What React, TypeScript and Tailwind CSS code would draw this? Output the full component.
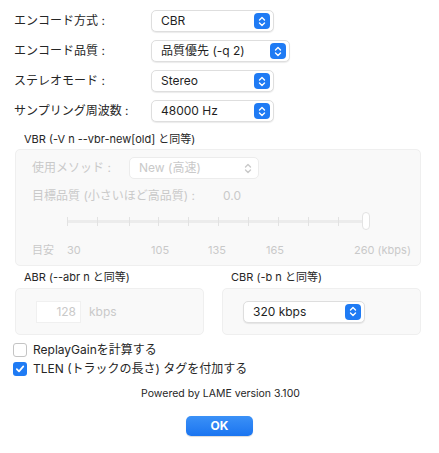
import React from "react";

const FONT = { fontFamily: 'Inter, "Noto Sans CJK JP", sans-serif' };

function Chevrons({ color }: { color: string }) {
  return (
    <svg width="8" height="11" viewBox="0 0 8 11" fill="none">
      <path d="M1.5 4 L4 1.5 L6.5 4" stroke={color} strokeWidth="1.4" strokeLinecap="round" strokeLinejoin="round" />
      <path d="M1.5 7 L4 9.5 L6.5 7" stroke={color} strokeWidth="1.4" strokeLinecap="round" strokeLinejoin="round" />
    </svg>
  );
}

function Select({ text, width, disabled }: { text: string; width: string; disabled?: boolean }) {
  if (disabled) {
    return (
      <div className={`${width} h-[22px] rounded-[5px] bg-white border border-[#ececec] flex items-center justify-between pl-[9px] pr-[6px] text-[12px] text-[#c9c9c9]`}>
        <span>{text}</span>
        <Chevrons color="#c9c9c9" />
      </div>
    );
  }
  return (
    <div className={`${width} h-[22px] rounded-[5px] bg-white border border-[#dedede] shadow-[0_1px_1px_rgba(0,0,0,0.08)] flex items-center justify-between pl-[9px] pr-[3px] text-[12px] text-[#1f1f1f]`}>
      <span>{text}</span>
      <div className="w-[16px] h-[16px] rounded-[4px] bg-[#1f7bf4] flex items-center justify-center">
        <Chevrons color="#ffffff" />
      </div>
    </div>
  );
}

function Row({ label, children }: { label: string; children: React.ReactNode }) {
  return (
    <div className="flex items-center h-[22px]">
      <div className="w-[137px] text-[12px] text-[#262626]">{label}</div>
      {children}
    </div>
  );
}

function Checkbox({ checked }: { checked?: boolean }) {
  if (checked) {
    return (
      <div className="w-[14px] h-[14px] rounded-[3px] bg-[#1f7bf4] flex items-center justify-center">
        <svg width="10" height="10" viewBox="0 0 10 10" fill="none">
          <path d="M1.8 5.2 L4 7.4 L8.3 2.4" stroke="#fff" strokeWidth="1.7" strokeLinecap="round" strokeLinejoin="round" />
        </svg>
      </div>
    );
  }
  return <div className="w-[14px] h-[14px] rounded-[3px] bg-white border border-[#c4c4c4]" />;
}

const TICKS = [0, 30, 62, 91, 121, 151, 181, 211, 241, 271];

export default function App() {
  return (
    <div style={FONT} className="w-[439px] h-[453px] bg-white pt-[10px] flex flex-col">
      <div className="pl-[14px] flex flex-col gap-[8px]">
        <Row label="エンコード方式 :">
          <Select text="CBR" width="w-[123px]" />
        </Row>
        <Row label="エンコード品質 :">
          <Select text="品質優先 (-q 2)" width="w-[139px]" />
        </Row>
        <Row label="ステレオモード :">
          <Select text="Stereo" width="w-[123px]" />
        </Row>
        <Row label="サンプリング周波数 :">
          <Select text="48000 Hz" width="w-[123px]" />
        </Row>
      </div>

      <div className="pl-[24px] mt-[9px] text-[11px] text-[#262626] leading-[16px]">VBR (-V n --vbr-new[old] と同等)</div>
      <div className="ml-[15px] mt-[2px] w-[406px] h-[117px] rounded-[5px] bg-[#f9f9f9] border border-[#efefef] pl-[16px] pt-[7px] flex flex-col">
        <div className="flex items-center h-[22px]">
          <div className="w-[97px] text-[12px] text-[#c9c9c9]">使用メソッド :</div>
          <Select text="New (高速)" width="w-[130px]" disabled />
        </div>
        <div className="flex items-center h-[18px] mt-[8px] text-[12px] text-[#c9c9c9]">
          <span className="w-[191px]">目標品質 (小さいほど高品質) :</span>
          <span>0.0</span>
        </div>
        <div className="relative ml-[35px] mt-[6px] w-[305px] h-[20px]">
          <div className="absolute left-0 top-[9px] w-[300px] h-[3px] rounded-full bg-[#ececec]" />
          {TICKS.map((t) => (
            <div key={t} className="absolute top-[6px] w-[1px] h-[9px] bg-[#e2e2e2]" style={{ left: t }} />
          ))}
          <div className="absolute left-[295px] top-[1px] w-[8px] h-[18px] rounded-full bg-white border border-[#e3e3e3]" />
        </div>
        <div className="relative h-[16px] mt-[11px] text-[11px] text-[#c9c9c9]">
          <span className="absolute left-0">目安</span>
          <span className="absolute left-[35px]">30</span>
          <span className="absolute left-[119px]">105</span>
          <span className="absolute left-[176px]">135</span>
          <span className="absolute left-[234px]">165</span>
          <span className="absolute left-[322px]">260 (kbps)</span>
        </div>
      </div>

      <div className="flex mt-[3px] ml-[15px] gap-[18px]">
        <div className="flex flex-col w-[189px]">
          <div className="pl-[9px] text-[11px] text-[#262626] leading-[16px]">ABR (--abr n と同等)</div>
          <div className="mt-[3px] h-[47px] rounded-[5px] bg-[#f9f9f9] border border-[#efefef] flex items-center pl-[20px]">
            <div className="w-[45px] h-[22px] bg-white border border-[#f0f0f0] flex items-center justify-end pr-[4px] text-[12px] text-[#c9c9c9]">128</div>
            <span className="ml-[8px] text-[12px] text-[#c9c9c9]">kbps</span>
          </div>
        </div>
        <div className="flex flex-col w-[199px]">
          <div className="pl-[9px] text-[11px] text-[#262626] leading-[16px]">CBR (-b n と同等)</div>
          <div className="mt-[3px] h-[47px] rounded-[5px] bg-[#f9f9f9] border border-[#efefef] flex items-center pl-[20px]">
            <Select text="320 kbps" width="w-[122px]" />
          </div>
        </div>
      </div>

      <div className="pl-[13px] mt-[8px] flex flex-col gap-[5px] text-[12px] text-[#262626]">
        <div className="flex items-center gap-[6px] h-[14px]">
          <Checkbox />
          <span>ReplayGainを計算する</span>
        </div>
        <div className="flex items-center gap-[6px] h-[14px]">
          <Checkbox checked />
          <span>TLEN (トラックの長さ) タグを付加する</span>
        </div>
      </div>

      <div className="mt-[10px] text-center text-[10.5px] text-[#262626] pl-[2px]">Powered by LAME version 3.100</div>

      <div className="mt-[14px] flex justify-center">
        <div className="w-[67px] h-[20px] rounded-[5px] bg-gradient-to-b from-[#3b91f7] to-[#1a74f0] shadow-[0_1px_1px_rgba(0,0,0,0.15)] flex items-center justify-center text-[12px] font-bold text-white">OK</div>
      </div>
    </div>
  );
}
